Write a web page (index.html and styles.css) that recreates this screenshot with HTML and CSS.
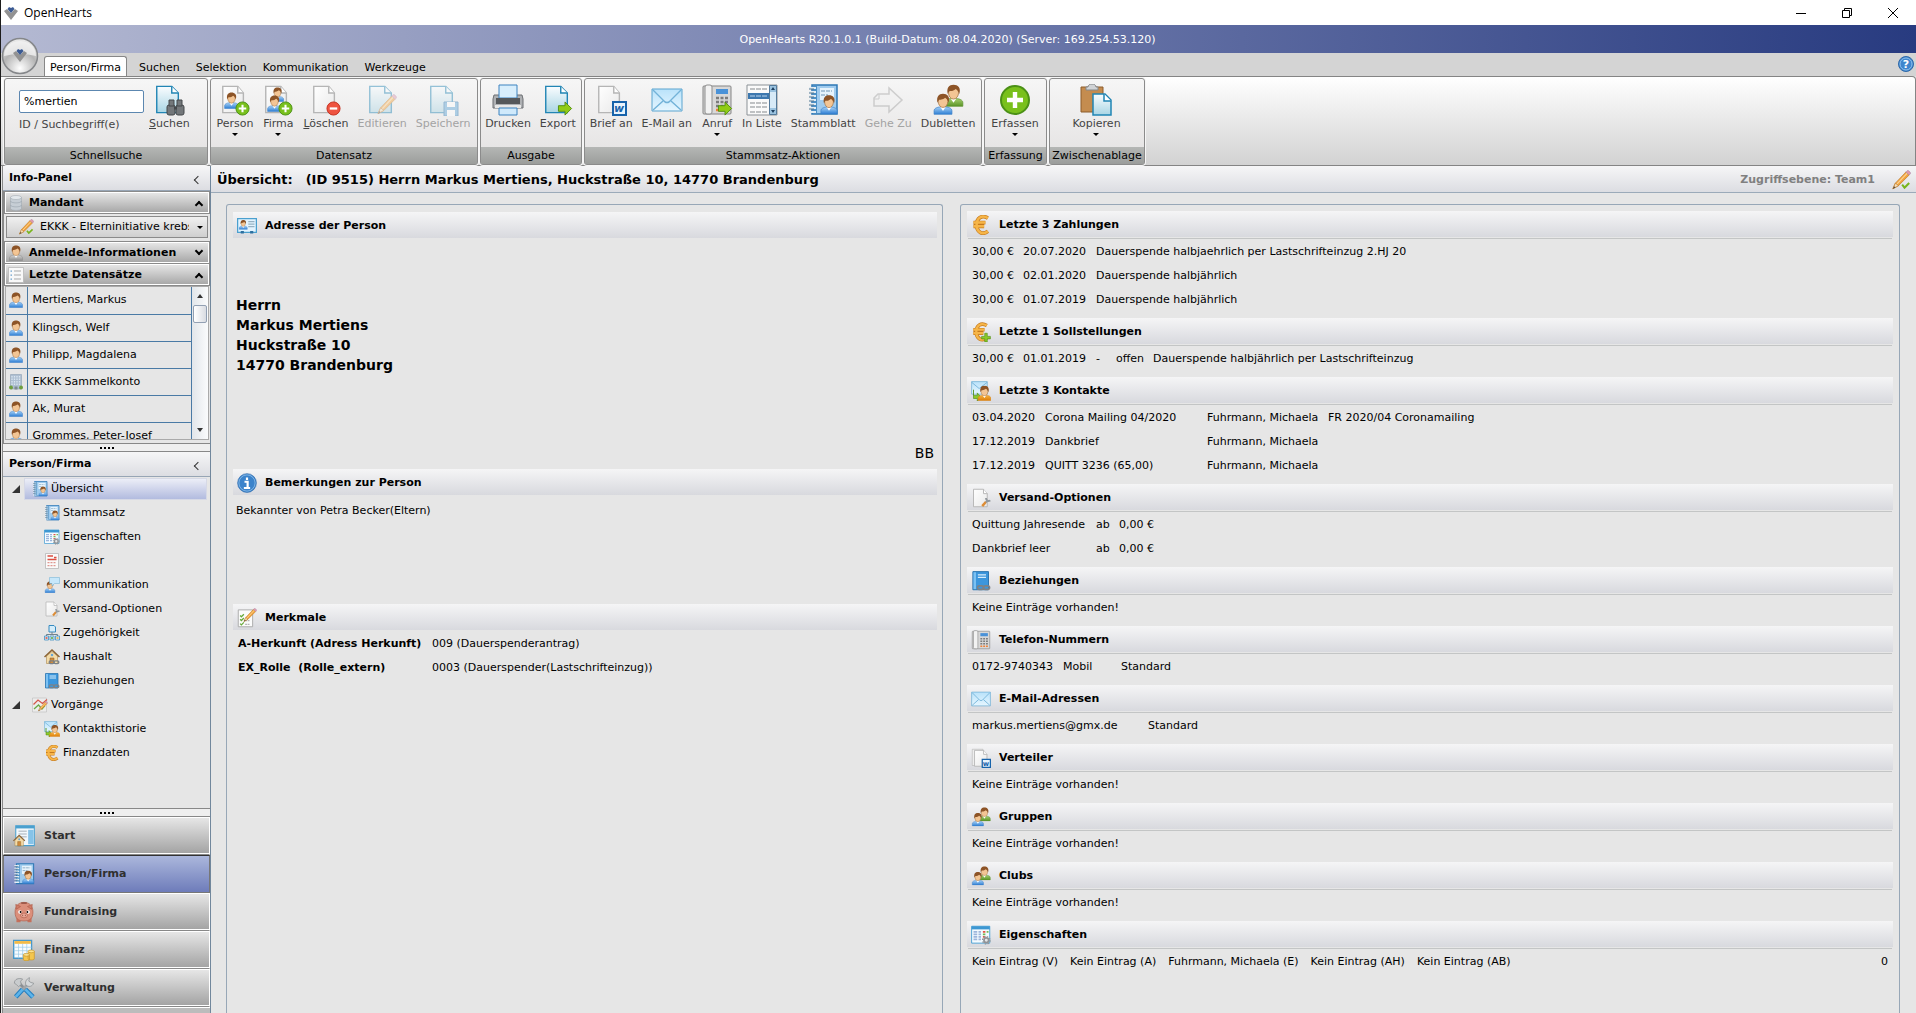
FILE: index.html
```html
<!DOCTYPE html>
<html lang="de">
<head>
<meta charset="utf-8">
<title>OpenHearts</title>
<link rel="stylesheet" href="styles.css">
</head>
<body>
<svg class="defs" aria-hidden="true">
  <defs>
    <linearGradient id="gBlue" x1="0" y1="0" x2="0" y2="1"><stop offset="0" stop-color="#a9d3f7"/><stop offset="1" stop-color="#2f7fd4"/></linearGradient>
    <linearGradient id="gGreen" x1="0" y1="0" x2="0" y2="1"><stop offset="0" stop-color="#a8d070"/><stop offset="1" stop-color="#5a9426"/></linearGradient>
    <linearGradient id="gOrange" x1="0" y1="0" x2="0" y2="1"><stop offset="0" stop-color="#f6b545"/><stop offset="1" stop-color="#dd7d08"/></linearGradient>
    <linearGradient id="gGray" x1="0" y1="0" x2="0" y2="1"><stop offset="0" stop-color="#d6d6d6"/><stop offset="1" stop-color="#8e8e8e"/></linearGradient>
    <linearGradient id="gDoc" x1="0" y1="0" x2="0" y2="1"><stop offset="0" stop-color="#fafdff"/><stop offset="1" stop-color="#a9d5e4"/></linearGradient>
    <linearGradient id="gPaper" x1="0" y1="0" x2="1" y2="1"><stop offset="0" stop-color="#ffffff"/><stop offset="1" stop-color="#e9e9e9"/></linearGradient>
    <linearGradient id="gMail" x1="0" y1="0" x2="0" y2="1"><stop offset="0" stop-color="#b9e2fa"/><stop offset="1" stop-color="#e6f6ff"/></linearGradient>
    <radialGradient id="gOrb" cx=".5" cy=".85" r=".8"><stop offset="0" stop-color="#fff"/><stop offset=".6" stop-color="#b4b4b4"/><stop offset="1" stop-color="#e8e8e8"/></radialGradient>
  </defs>
  <symbol id="logo" viewBox="0 0 16 16"><path d="M1 6 4 4l4 4 4-4 3 2-7 9z" fill="#929292"/><path d="M4.500 4 6 2l2 1 2-1 1.500 2L8 8z" fill="#3a5a94"/></symbol>
  <symbol id="head" viewBox="0 0 32 32"><path d="M3 31v-5c0-4 5-6 13-6s13 2 13 6v5z" stroke-width="1"/><path d="M12 20h8l-4 6z" fill="#fff" stroke="none"/><ellipse cx="16" cy="12" rx="7" ry="9" fill="#f3c594" stroke="#a26f3b"/><path d="M8 14C6 5 10 1 16 1s11 4 8 13c-1-4-3-6-5-7-3 3-8 3-9 3z" fill="#8d5427" stroke="none"/></symbol>
  <symbol id="person" viewBox="0 0 32 32"><use href="#head" fill="url(#gBlue)" stroke="#3a7fc8"/></symbol>
  <symbol id="person-green" viewBox="0 0 32 32"><use href="#head" fill="url(#gGreen)" stroke="#5d9231"/></symbol>
  <symbol id="person-orange" viewBox="0 0 32 32"><use href="#head" fill="url(#gOrange)" stroke="#d9820f"/></symbol>
  <symbol id="person-gray" viewBox="0 0 32 32"><use href="#head" fill="url(#gGray)" stroke="#888"/></symbol>
  <symbol id="doc" viewBox="0 0 32 32"><path d="M4 2h16l7 7v21H4z" fill="url(#gDoc)" stroke="#2185b4" stroke-width="1.500"/><path d="M20 2v7h7" fill="#fff" stroke="#2185b4" stroke-width="1.500"/></symbol>
  <symbol id="paper" viewBox="0 0 32 32"><path d="M4 2h16l6 7v21H4z" fill="url(#gPaper)" stroke="#b5b5b5" stroke-width="1.500"/><path d="M20 2v7h6" fill="#fff" stroke="#b5b5b5" stroke-width="1.500"/></symbol>
  <symbol id="plus" viewBox="0 0 16 16"><circle cx="8" cy="8" r="7" fill="#79c01c" stroke="#4b9016"/><path d="M8 4v8M4 8h8" stroke="#fff" stroke-width="2.200"/></symbol>
  <symbol id="minus" viewBox="0 0 16 16"><circle cx="8" cy="8" r="7" fill="#ee5340" stroke="#c5301f"/><path d="M4 8h8" stroke="#fff" stroke-width="2.400"/></symbol>
  <symbol id="pencil" viewBox="0 0 32 32"><path d="M3 30 7 21 24 3l5 5L12 25z" fill="#f2a33c" stroke="#b87422"/><path d="M9 23 26 5" stroke="#fbd394" stroke-width="2"/><path d="M3 30 7 21l5 4z" fill="#f4dfbe" stroke="#b87422"/><path d="m3 30 2-4 2 2z" fill="#444"/><path d="m24 3 2-2c2-1 6 3 5 5l-2 2z" fill="#e49aae" stroke="#a98aa8"/></symbol>
  <symbol id="check" viewBox="0 0 16 16"><path d="m2 8 4 5 8-8" fill="none" stroke="#78b51c" stroke-width="3.500"/></symbol>
  <symbol id="arrow" viewBox="0 0 16 16"><path d="M1 5h7V1l7 7-7 7v-4H1z" fill="#90cb15" stroke="#518d10"/></symbol>
  <symbol id="chain" viewBox="0 0 16 8"><g fill="none" stroke="#7d8286" stroke-width="2"><rect x="1" y="2" width="7" height="4" rx="2"/><rect x="8" y="2" width="7" height="4" rx="2"/></g></symbol>
  <symbol id="gear" viewBox="0 0 16 16"><circle cx="8" cy="8" r="4" fill="#e4e6e8" stroke="#909498" stroke-width="3"/><circle cx="8" cy="8" r="6.500" fill="none" stroke="#909498" stroke-width="2" stroke-dasharray="2.550"/></symbol>
  <symbol id="mail" viewBox="0 0 32 32"><path d="M1 5h30v22H1z" fill="url(#gMail)" stroke="#5ba4cf"/><path d="m2 26 10-9M30 26l-10-9M2 6l12 12q2 1 4 0L30 6" fill="none" stroke="#72b2d8" stroke-width="1.400"/></symbol>
  <symbol id="phone" viewBox="0 0 32 32"><rect x="2" y="2" width="28" height="28" rx="1" fill="#d8d8d8" stroke="#858585"/><rect x="4" y="1" width="7" height="29" rx="2" fill="#f2f2f2" stroke="#8e8e8e"/><path d="M15 5h12v5H15z" fill="#4a92d8"/><path d="M15 14h12M15 18h12M15 22h12" stroke="#7c7c7c" stroke-width="2.500" stroke-dasharray="3 1.500"/><path d="M15 26h12" stroke="#ee8138" stroke-width="2.500" stroke-dasharray="3 1.500"/></symbol>
  <symbol id="notebook" viewBox="0 0 32 32"><path d="M5 1h25v29H5z" fill="#9fcbee" stroke="#2e78b5" stroke-width="1.500"/><path d="M6 2h4v27H6z" fill="#4b90c6"/><path d="M2 4h7M2 8h7M2 12h7M2 16h7M2 20h7M2 24h7M2 28h7" stroke="#e3edf4" stroke-width="2"/><path d="M2 5h5M2 9h5M2 13h5M2 17h5M2 21h5M2 25h5" stroke="#55768f"/><path d="M13 4h14v12H13z" fill="#e6f3fc"/><path d="M14 7h11M14 11h7" stroke="#6e95b4" stroke-dasharray="4 1"/><use href="#person" x="12" y="9" width="20" height="23"/></symbol>
  <symbol id="book" viewBox="0 0 32 32"><path d="M3 1h25v29H3z" fill="#3c96dc" stroke="#2772ad" stroke-width="1.500"/><path d="M4 2h4v27H4z" fill="#7cc1f2"/><path d="M11 6h13M11 10h13" stroke="#d7edfb" stroke-width="2"/><use href="#chain" x="8" y="21" width="24" height="11"/></symbol>
  <symbol id="group" viewBox="0 0 32 32"><use href="#person-green" x="10" y="0" width="23" height="23"/><use href="#person" x="0" y="9" width="22" height="22"/></symbol>
  <symbol id="euro" viewBox="0 0 32 32"><path d="M27 5C17-1 9 5 9 16s9 17 18 10M4 12h19M4 18h17" fill="none" stroke="#c57a1e" stroke-width="6"/><path d="M27 5C17-1 9 5 9 16s9 17 18 10M4 12h19M4 18h17" fill="none" stroke="#f6b548" stroke-width="4"/></symbol>
  <symbol id="euro-plus" viewBox="0 0 32 32"><use href="#euro" width="30" height="32"/><path d="M22 18h4v5h5v4h-5v5h-4v-5h-5v-4h5z" fill="#8cc928" stroke="#4d8c12"/></symbol>
  <symbol id="contact" viewBox="0 0 32 32"><path d="M1 1h25v20H1z" fill="url(#gMail)" stroke="#5ba4cf"/><path d="m1 2 12 10L26 2" fill="none" stroke="#72b2d8" stroke-width="1.400"/><path d="M4 14v9h6v-4l6 7-6 6v-4H4z" fill="#8cc928" stroke="#4d8c12"/><use href="#person-orange" x="9" y="7" width="25" height="25"/></symbol>
  <symbol id="props" viewBox="0 0 32 32"><path d="M1 2h29v27H1z" fill="#f4fbff" stroke="#4aa0d4" stroke-width="1.500"/><path d="M1 2h29v5H1z" fill="#3d97d2"/><path d="M4 11h6M4 15h6M4 19h6M4 23h6M12 11h4M12 15h4M12 19h4M12 23h4" stroke="#9cb5dc" stroke-width="2.500"/><path d="M19 11h4M19 19h4" stroke="#e45546" stroke-width="2.500"/><path d="M19 15h4M25 11h3" stroke="#73ba53" stroke-width="2.500"/><use href="#gear" x="17" y="17" width="15" height="15"/></symbol>
  <symbol id="send" viewBox="0 0 32 32"><use href="#paper" width="32" height="32"/><path d="m18 29 6-7" stroke="#dd8c35" stroke-width="4"/><path d="m24 23 3-4M24 16c0 4 3 6 7 4" fill="none" stroke="#92989d" stroke-width="3"/></symbol>
  <symbol id="card" viewBox="0 0 32 32"><path d="M1 4h30v22H1z" fill="#e3f4ff" stroke="#4ba0cf" stroke-width="2"/><use href="#person" x="2" y="6" width="16" height="16"/><path d="M18 9h10M18 13h10M18 17h10" stroke="#97b2c4" stroke-width="2"/><path d="M6 26h5M21 26h5" stroke="#2c6f9f" stroke-width="4"/></symbol>
  <symbol id="info" viewBox="0 0 32 32"><circle cx="16" cy="16" r="15" fill="#3b83cb" stroke="#2b66a8"/><circle cx="16" cy="16" r="13" fill="none" stroke="#a9d2f3"/><path d="M16 7v4M12 14h5v10M11 24h10" fill="none" stroke="#fff" stroke-width="3.500"/></symbol>
  <symbol id="notes" viewBox="0 0 32 32"><path d="M2 3h23v27H2z" fill="#fbfbfb" stroke="#aaa" stroke-width="1.500"/><path d="m5 12 2 2 4-4M5 18l2 2 4-4M5 25l2 2 4-4" fill="none" stroke="#67a93a" stroke-width="2"/><path d="M13 20h8M13 26h8" stroke="#b5b5b5" stroke-width="2" stroke-dasharray="3 1"/><use href="#pencil" x="9" y="0" width="23" height="23"/></symbol>
  <symbol id="dossier" viewBox="0 0 32 32"><path d="M3 1h26v30H3z" fill="#fafafa" stroke="#b4b4b4" stroke-width="1.500"/><path d="M7 6h11M20 9h5M7 13h18" stroke="#dc4f41" stroke-width="3"/><path d="M7 19h18M7 25h18" stroke="#df9790" stroke-width="2.500" stroke-dasharray="4 2"/></symbol>
  <symbol id="talk" viewBox="0 0 32 32"><use href="#person" x="0" y="8" width="24" height="24"/><path d="M11 1h20v12H21l-5 5v-5h-5z" fill="#c7e7fa" stroke="#68add3"/></symbol>
  <symbol id="tree" viewBox="0 0 32 32"><path d="M10 1h10l3 3v10H10z" fill="#d5edfa" stroke="#378bc0" stroke-width="2"/><path d="M16 14v5M5 23v-4h22v4" fill="none" stroke="#74828c" stroke-width="2"/><g fill="#dfeff8" stroke="#378bc0" stroke-width="1.500"><path d="M1 22h8v8H1zM12 22h8v8h-8zM23 22h8v8h-8z"/></g><path d="M3 26h4" stroke="#dd4433" stroke-width="3"/><path d="M14 26h4" stroke="#56a738" stroke-width="3"/><path d="M25 26h4" stroke="#e4a436" stroke-width="3"/></symbol>
  <symbol id="house" viewBox="0 0 32 32"><path d="M5 14v15h22V14L16 5z" fill="#f3dba8" stroke="#9d7434"/><path d="M1 16 16 2l15 14" fill="none" stroke="#8b6435" stroke-width="3"/><path d="M12 18h8v11h-8z" fill="#d08b3c" stroke="#8b5c24"/><circle cx="16" cy="12" r="2.500" fill="#68a6d2"/></symbol>
  <symbol id="household" viewBox="0 0 32 32"><use href="#house" width="32" height="32"/><use href="#chain" x="8" y="21" width="24" height="11"/></symbol>
  <symbol id="process" viewBox="0 0 32 32"><path d="M1 2h28v28H1z" fill="#ececec" stroke="#b3b3b3"/><path d="m3 15 9-9 9 7 9-8" fill="none" stroke="#d4574a" stroke-width="2.500"/><path d="m4 24 9-8 7 8 6-7" fill="none" stroke="#68aa45" stroke-width="2.500"/><use href="#pencil" x="11" y="8" width="21" height="21"/></symbol>
  <symbol id="building" viewBox="0 0 32 32"><path d="M5 1h22v29H5z" fill="#aebfd2" stroke="#8197ab"/><path d="M8 4v22M13 4v20M18 4v20M23 4v22" stroke="#dbe7f1" stroke-width="2.500" stroke-dasharray="3 2"/><path d="M13 25h6v6h-6z" fill="#7f8a8f"/><circle cx="6" cy="27" r="4" fill="#6f9f3e"/><circle cx="26" cy="27" r="4" fill="#6f9f3e"/></symbol>
  <symbol id="db" viewBox="0 0 32 32"><path d="M5 5v22c0 5 22 5 22 0V5z" fill="#c6ced5" stroke="#9aa4ad"/><path d="M5 12c0 5 22 5 22 0M5 20c0 5 22 5 22 0" fill="none" stroke="#8f9ba5"/><ellipse cx="16" cy="5" rx="11" ry="4" fill="#e4e9ed" stroke="#9aa4ad"/></symbol>
  <symbol id="lines" viewBox="0 0 32 32"><path d="M1 1h30v30H1z" fill="#f8f8f8" stroke="#b5b5b5" stroke-width="1.500"/><path d="M12 8h14M12 16h14M12 24h14" stroke="#a9a9a9" stroke-width="2"/><path d="M5 8h3M5 16h3M5 24h3" stroke="#6ba0cc" stroke-width="2.500"/></symbol>
  <symbol id="check-pencil" viewBox="0 0 32 32"><use href="#pencil" width="32" height="32"/><use href="#check" x="16" y="16" width="15" height="15"/></symbol>
  <symbol id="start" viewBox="0 0 32 32"><path d="M4 1h27v29H4z" fill="#f2f8fc" stroke="#4aa0cf" stroke-width="1.500"/><path d="M4 1h27v4H4z" fill="#4aa0cf"/><path d="M8 9h12M8 13h12M8 17h12" stroke="#c0c8cf" stroke-width="2"/><path d="M22 7h8v21h-8z" fill="#86c3e8"/><use href="#house" x="0" y="14" width="18" height="18"/></symbol>
  <symbol id="pig" viewBox="0 0 32 32"><path d="M5 24h6v7H5zM21 24h6v7h-6z" fill="#c4705c"/><path d="M3 16C3 6 9 2 16 2s13 4 13 14-5 13-13 13S3 26 3 16z" fill="#db8f7b" stroke="#b0604d"/><path d="M5 12 4 5l7 3zM27 12l1-7-7 3z" fill="#cf7c67" stroke="#b0604d"/><path d="M12 3h8" stroke="#8d4a3b" stroke-width="2"/><circle cx="10" cy="16" r="2.500" fill="#fff"/><circle cx="22" cy="16" r="2.500" fill="#fff"/><circle cx="11" cy="16" r="1.300"/><circle cx="21" cy="16" r="1.300"/><ellipse cx="16" cy="21" rx="5" ry="3.500" fill="#eaa796" stroke="#b0604d"/><path d="M14 20v2M18 20v2" stroke="#7c3d30"/></symbol>
  <symbol id="finance" viewBox="0 0 32 32"><path d="M1 2h26v26H1z" fill="#f7fcff" stroke="#4898ca" stroke-width="2"/><path d="M2 3h24v4H2z" fill="#f3ba46"/><path d="M1 12h26M1 17h26M1 22h26M8 7v21M14 7v21M20 7v21" stroke="#9ccae6"/><path d="M15 23v7c0 2 9 2 9 0v-7M22 18v11c0 2 9 2 9 0V18" fill="#f4c64e" stroke="#c79324"/><ellipse cx="19.500" cy="23" rx="4.500" ry="2" fill="#fbe391" stroke="#c79324"/><ellipse cx="26.500" cy="18" rx="4.500" ry="2" fill="#fbe391" stroke="#c79324"/></symbol>
  <symbol id="tools" viewBox="0 0 32 32"><path d="m8 8 12 12" stroke="#8c9094" stroke-width="4"/><path d="M2 9C2 3 8 1 14 3l-3 3 1 5-4 3-3-3z" fill="#c9ccce" stroke="#85898c"/><path d="m20 12-6 6" stroke="#a1a5a8" stroke-width="4"/><path d="M30 9c-2 5-7 6-11 3-2-4 0-9 5-11l-1 5 3 2z" fill="#d6d9db" stroke="#85898c"/><path d="m18 18 11 11M14 18 4 29" stroke="#277fbf" stroke-width="7"/><path d="m18 18 11 11M14 18 4 29" stroke="#5cb4ea" stroke-width="4"/></symbol>
</svg>

<header class="titlebar">
  <svg class="i16"><use href="#logo"/></svg>
  <h1>OpenHearts</h1>
  <div class="win-buttons">
    <button aria-label="Minimieren"><svg viewBox="0 0 10 10"><path d="M0 5.500h10"/></svg></button>
    <button aria-label="Verkleinern"><svg viewBox="0 0 10 10"><path d="M.5 2.500h7v7h-7zM2.500 2V.5h7v7H8"/></svg></button>
    <button aria-label="Schließen"><svg viewBox="0 0 10 10"><path d="m0 0 10 10M10 0 0 10"/></svg></button>
  </div>
</header>
<div class="caption">OpenHearts R20.1.0.1 (Build-Datum: 08.04.2020) (Server: 169.254.53.120)</div>
<nav class="tabs">
  <button class="orb" aria-label="Menü"><svg viewBox="0 0 38 38"><circle cx="19" cy="19" r="17.500" fill="url(#gOrb)" stroke="#85878a" stroke-width="1.500"/><path d="M3 19C3-1 35-1 35 19q-16-4-32 0" fill="#f4f4f4" opacity=".75"/><use href="#logo" x="11" y="10" width="16" height="16"/></svg></button>
  <a class="tab active" href="#">Person/Firma</a>
  <a class="tab" href="#">Suchen</a>
  <a class="tab" href="#">Selektion</a>
  <a class="tab" href="#">Kommunikation</a>
  <a class="tab" href="#">Werkzeuge</a>
  <button class="help" aria-label="Hilfe"><svg viewBox="0 0 16 16"><circle cx="8" cy="8" r="7.500" fill="#3f86cd" stroke="#2f68a8"/><circle cx="8" cy="8" r="6" fill="none" stroke="#8fc0ec"/><text x="8" y="12" text-anchor="middle" font-size="11" font-weight="bold" fill="#fff">?</text></svg></button>
</nav>

<section class="ribbon">
  <div class="group g-search">
    <div class="items">
      <div class="search"><input id="q" type="text" value="%mertien"><label for="q">ID / Suchbegriff(e)</label></div>
      <button class="tool"><svg viewBox="0 0 32 32"><use href="#doc" width="30" height="31"/><g fill="#73777a" stroke="#45484b"><rect x="14" y="21" width="8" height="10" rx="2"/><rect x="23" y="21" width="8" height="10" rx="2"/><path d="M16 16h5v6h-5zM24 16h5v6h-5z"/></g><path d="M21 24h3" stroke="#45484b" stroke-width="3"/></svg><span><u>S</u>uchen</span></button>
    </div>
    <h2>Schnellsuche</h2>
  </div>
  <div class="group g-record">
    <div class="items">
      <button class="tool"><svg viewBox="0 0 32 32"><use href="#paper" width="30" height="31"/><use href="#person" x="4" y="8" width="17" height="17"/><use href="#plus" x="16" y="17" width="15" height="15"/></svg><span>Person</span><i></i></button>
      <button class="tool"><svg viewBox="0 0 32 32"><use href="#paper" width="30" height="31"/><use href="#person" x="8" y="3" width="15" height="15"/><use href="#person" x="4" y="11" width="17" height="17"/><use href="#plus" x="16" y="17" width="15" height="15"/></svg><span>Firma</span><i></i></button>
      <button class="tool"><svg viewBox="0 0 32 32"><use href="#paper" width="30" height="31"/><use href="#minus" x="16" y="17" width="15" height="15"/></svg><span><u>L</u>öschen</span></button>
      <button class="tool" disabled><svg viewBox="0 0 32 32"><use href="#doc" width="30" height="31"/><use href="#pencil" x="10" y="10" width="21" height="21"/></svg><span>Editieren</span></button>
      <button class="tool" disabled><svg viewBox="0 0 32 32"><use href="#doc" width="30" height="31"/><path d="M17 18h14v14H17z" fill="#5fa7d8" stroke="#2a76b0"/><path d="M20 18h8v5h-8zM20 26h8v6h-8z" fill="#fff"/></svg><span>Speichern</span></button>
    </div>
    <h2>Datensatz</h2>
  </div>
  <div class="group g-output">
    <div class="items">
      <button class="tool"><svg viewBox="0 0 32 32"><path d="M2 11h28l1 4v9H1v-9z" fill="#aeb0b3" stroke="#6c6f72"/><path d="M7 1h18v13H7z" fill="#d8eefc" stroke="#3c83c0"/><path d="M4 14h24v6H4z" fill="#55585b"/><path d="M3 21h26v3H3z" fill="#e8e8e8"/><path d="M7 24h18v7H7z" fill="#cfe9fb" stroke="#3c83c0"/></svg><span>Drucken</span></button>
      <button class="tool"><svg viewBox="0 0 32 32"><use href="#doc" width="30" height="31"/><use href="#arrow" x="15" y="17" width="16" height="15"/></svg><span>Export</span></button>
    </div>
    <h2>Ausgabe</h2>
  </div>
  <div class="group g-actions">
    <div class="items">
      <button class="tool"><svg viewBox="0 0 32 32"><use href="#paper" width="30" height="31"/><path d="M18 18h13v13H18z" fill="#e8f3fc" stroke="#1763ab" stroke-width="2"/><text x="24" y="28" text-anchor="middle" font-size="11" font-weight="bold" font-style="italic" fill="#1763ab">w</text></svg><span>Brief an</span></button>
      <button class="tool"><svg><use href="#mail"/></svg><span>E-Mail an</span></button>
      <button class="tool"><svg viewBox="0 0 32 32"><use href="#phone" width="32" height="32"/><use href="#arrow" x="16" y="17" width="16" height="15"/></svg><span>Anruf</span><i></i></button>
      <button class="tool"><svg viewBox="0 0 32 32"><path d="M1 1h30v30H1z" fill="#fafafa" stroke="#8b9196"/><path d="M2 9h21v6H2z" fill="#3c77ae"/><path d="M4 5h17M4 19h17M4 23h17M4 28h17" stroke="#84898d" stroke-dasharray="5 1"/><path d="M4 12h17" stroke="#b9d5ee" stroke-dasharray="5 1"/><path d="M23.500 1.500h7v29h-7z" fill="#d7eaf7" stroke="#53799a"/><path d="M24 2h6v6h-6zM24 24h6v6h-6z" fill="#9bc3e0"/><path d="m25 6 2-3 2 3zM25 26l2 3 2-3z" fill="#1d3f60"/></svg><span>In Liste</span></button>
      <button class="tool"><svg><use href="#notebook"/></svg><span>Stammblatt</span></button>
      <button class="tool" disabled><svg viewBox="0 0 32 32"><path d="M2 14l4-4h11V4l13 12-13 12v-6H2z" fill="#f2f2f2" stroke="#a2a2a2" stroke-width="1.500"/><path d="M7 10v5H2" fill="none" stroke="#a2a2a2"/></svg><span>Gehe Zu</span></button>
      <button class="tool"><svg><use href="#group"/></svg><span>Dubletten</span></button>
    </div>
    <h2>Stammsatz-Aktionen</h2>
  </div>
  <div class="group g-entry">
    <div class="items">
      <button class="tool"><svg><use href="#plus"/></svg><span>Erfassen</span><i></i></button>
    </div>
    <h2>Erfassung</h2>
  </div>
  <div class="group g-clip">
    <div class="items">
      <button class="tool"><svg viewBox="0 0 32 32"><path d="M1 3h22v25H1z" fill="#c48c4f" stroke="#8c5d2c"/><path d="M8 3c0-4 8-4 8 0h2v3H6V3z" fill="#d0d3d6" stroke="#85888b"/><path d="M13 10h12l6 6v15H13z" fill="url(#gDoc)" stroke="#2185b4" stroke-width="1.500"/><path d="M24 10v7h7" fill="#fff" stroke="#2185b4" stroke-width="1.500"/></svg><span>Kopieren</span><i></i></button>
    </div>
    <h2>Zwischenablage</h2>
  </div>
</section>

<div class="body">
  <aside class="sidebar">
    <h2 class="panel-head">Info-Panel<button class="collapse" aria-label="Einklappen"></button></h2>
    <div class="info">
      <h3 class="fold"><svg class="i16"><use href="#db"/></svg>Mandant<b class="up"></b></h3>
      <div class="combo">
        <svg class="i16"><use href="#check-pencil"/></svg>
        <select aria-label="Mandant"><option>EKKK - Elterninitiative krebs</option></select>
        <i></i>
      </div>
      <h3 class="fold"><svg class="i16"><use href="#person-gray"/></svg>Anmelde-Informationen<b class="down"></b></h3>
      <h3 class="fold"><svg class="i16"><use href="#lines"/></svg>Letzte Datensätze<b class="up"></b></h3>
      <div class="recent">
        <table>
          <tr><td><svg class="i16"><use href="#person"/></svg></td><td>Mertiens, Markus</td></tr>
          <tr><td><svg class="i16"><use href="#person"/></svg></td><td>Klingsch, Welf</td></tr>
          <tr><td><svg class="i16"><use href="#person"/></svg></td><td>Philipp, Magdalena</td></tr>
          <tr><td><svg class="i16"><use href="#building"/></svg></td><td>EKKK Sammelkonto</td></tr>
          <tr><td><svg class="i16"><use href="#person"/></svg></td><td>Ak, Murat</td></tr>
          <tr><td><svg class="i16"><use href="#person"/></svg></td><td>Grommes, Peter-Josef</td></tr>
        </table>
        <div class="scroll"><i class="sup"></i><span></span><i class="sdown"></i></div>
      </div>
    </div>
    <div class="splitter"></div>
    <h2 class="panel-head">Person/Firma<button class="collapse" aria-label="Einklappen"></button></h2>
    <ul class="tree">
      <li class="root"><a class="selected" href="#"><svg class="i16"><use href="#notebook"/></svg>Übersicht</a></li>
      <li><a href="#"><svg class="i16"><use href="#notebook"/></svg>Stammsatz</a></li>
      <li><a href="#"><svg class="i16"><use href="#props"/></svg>Eigenschaften</a></li>
      <li><a href="#"><svg class="i16"><use href="#dossier"/></svg>Dossier</a></li>
      <li><a href="#"><svg class="i16"><use href="#talk"/></svg>Kommunikation</a></li>
      <li><a href="#"><svg class="i16"><use href="#send"/></svg>Versand-Optionen</a></li>
      <li><a href="#"><svg class="i16"><use href="#tree"/></svg>Zugehörigkeit</a></li>
      <li><a href="#"><svg class="i16"><use href="#household"/></svg>Haushalt</a></li>
      <li><a href="#"><svg class="i16"><use href="#book"/></svg>Beziehungen</a></li>
      <li class="root"><a href="#"><svg class="i16"><use href="#process"/></svg>Vorgänge</a></li>
      <li><a href="#"><svg class="i16"><use href="#contact"/></svg>Kontakthistorie</a></li>
      <li><a href="#"><svg class="i16"><use href="#euro"/></svg>Finanzdaten</a></li>
    </ul>
    <div class="splitter"></div>
    <nav class="modules">
      <button><svg><use href="#start"/></svg>Start</button>
      <button class="current"><svg><use href="#notebook"/></svg>Person/Firma</button>
      <button><svg><use href="#pig"/></svg>Fundraising</button>
      <button><svg><use href="#finance"/></svg>Finanz</button>
      <button><svg><use href="#tools"/></svg>Verwaltung</button>
      <div class="more"></div>
    </nav>
  </aside>

  <main>
    <div class="main-head">
      <h2><span>Übersicht:</span> <span>(ID 9515) Herrn Markus Mertiens, Huckstraße 10, 14770 Brandenburg</span></h2>
      <p>Zugriffsebene: Team1</p>
      <svg><use href="#check-pencil"/></svg>
    </div>
    <div class="columns">
      <div class="panel left">
        <section class="s-address">
          <h3><svg><use href="#card"/></svg>Adresse der Person</h3>
          <address>Herrn<br>Markus Mertiens<br>Huckstraße 10<br>14770 Brandenburg</address>
          <p class="code">BB</p>
        </section>
        <section class="s-remarks">
          <h3><svg><use href="#info"/></svg>Bemerkungen zur Person</h3>
          <p>Bekannter von Petra Becker(Eltern)</p>
        </section>
        <section class="s-traits">
          <h3><svg><use href="#notes"/></svg>Merkmale</h3>
          <table>
            <tr><th>A-Herkunft (Adress Herkunft)</th><td>009 (Dauerspenderantrag)</td></tr>
            <tr><th>EX_Rolle&nbsp; (Rolle_extern)</th><td>0003 (Dauerspender(Lastschrifteinzug))</td></tr>
          </table>
        </section>
      </div>
      <div class="panel right">
        <section>
          <h3><svg><use href="#euro"/></svg>Letzte 3 Zahlungen</h3>
          <table>
            <tr><td class="c-amount">30,00 €</td><td class="c-date">20.07.2020</td><td>Dauerspende halbjaehrlich per Lastschrifteinzug 2.HJ 20</td></tr>
            <tr><td>30,00 €</td><td>02.01.2020</td><td>Dauerspende halbjährlich</td></tr>
            <tr><td>30,00 €</td><td>01.07.2019</td><td>Dauerspende halbjährlich</td></tr>
          </table>
        </section>
        <section>
          <h3><svg><use href="#euro-plus"/></svg>Letzte 1 Sollstellungen</h3>
          <table>
            <tr><td class="c-amount">30,00 €</td><td class="c-date">01.01.2019</td><td class="c-dash">-</td><td class="c-state">offen</td><td>Dauerspende halbjährlich per Lastschrifteinzug</td></tr>
          </table>
        </section>
        <section>
          <h3><svg><use href="#contact"/></svg>Letzte 3 Kontakte</h3>
          <table>
            <tr><td class="c-date">03.04.2020</td><td class="c-subject">Corona Mailing 04/2020</td><td class="c-name">Fuhrmann, Michaela</td><td>FR 2020/04 Coronamailing</td></tr>
            <tr><td>17.12.2019</td><td>Dankbrief</td><td>Fuhrmann, Michaela</td><td></td></tr>
            <tr><td>17.12.2019</td><td>QUITT 3236 (65,00)</td><td>Fuhrmann, Michaela</td><td></td></tr>
          </table>
        </section>
        <section>
          <h3><svg><use href="#send"/></svg>Versand-Optionen</h3>
          <table>
            <tr><td class="c-option">Quittung Jahresende</td><td class="c-from">ab</td><td>0,00 €</td></tr>
            <tr><td>Dankbrief leer</td><td>ab</td><td>0,00 €</td></tr>
          </table>
        </section>
        <section>
          <h3><svg><use href="#book"/></svg>Beziehungen</h3>
          <p>Keine Einträge vorhanden!</p>
        </section>
        <section>
          <h3><svg><use href="#phone"/></svg>Telefon-Nummern</h3>
          <table><tr><td class="c-number">0172-9740343</td><td class="c-kind">Mobil</td><td>Standard</td></tr></table>
        </section>
        <section>
          <h3><svg><use href="#mail"/></svg>E-Mail-Adressen</h3>
          <table><tr><td class="c-mail">markus.mertiens@gmx.de</td><td>Standard</td></tr></table>
        </section>
        <section>
          <h3><svg viewBox="0 0 32 32"><path d="M2 2h17v26H2z" fill="#eee" stroke="#b5b5b5"/><use href="#paper" x="2" y="1" width="29" height="31"/><path d="M18 18h13v13H18z" fill="#e8f3fc" stroke="#1763ab" stroke-width="2"/><text x="24" y="28" text-anchor="middle" font-size="11" font-weight="bold" fill="#1763ab">w</text></svg>Verteiler</h3>
          <p>Keine Einträge vorhanden!</p>
        </section>
        <section>
          <h3><svg><use href="#group"/></svg>Gruppen</h3>
          <p>Keine Einträge vorhanden!</p>
        </section>
        <section>
          <h3><svg><use href="#group"/></svg>Clubs</h3>
          <p>Keine Einträge vorhanden!</p>
        </section>
        <section>
          <h3><svg><use href="#props"/></svg>Eigenschaften</h3>
          <div class="attributes"><span>Kein Eintrag (V)</span><span>Kein Eintrag (A)</span><span>Fuhrmann, Michaela (E)</span><span>Kein Eintrag (AH)</span><span>Kein Eintrag (AB)</span><span class="count">0</span></div>
        </section>
      </div>
    </div>
  </main>
</div>
</body>
</html>
```
FILE: styles.css
```css
* { box-sizing: border-box; }

body {
  margin: 0;
  height: 100vh;
  overflow: hidden;
  display: flex;
  flex-direction: column;
  background: #e6e6e6;
  border-left: 1px solid #1c1c1c;
  color: #000;
  font: 11px/16px Verdana, "DejaVu Sans", sans-serif;
}

h1, h2, h3, p, ul, address { margin: 0; padding: 0; font: inherit; }
ul { list-style: none; }
button, input, select { font: inherit; color: inherit; }
button { margin: 0; padding: 0; border: 0; background: none; }
a { color: inherit; text-decoration: none; }
table { border-collapse: collapse; }
td, th { padding: 0; text-align: left; white-space: nowrap; }
.defs { position: absolute; width: 0; height: 0; }
.i16 { width: 16px; height: 16px; flex: none; display: block; }

/* window frame */
.titlebar {
  height: 25px;
  flex: none;
  display: flex;
  align-items: center;
  gap: 5px;
  padding-left: 2px;
  background: #fff;
}
.titlebar h1 { flex: 1; font: 12px/16px "Segoe UI", "Open Sans", sans-serif; }
.win-buttons { display: flex; }
.win-buttons button { width: 46px; height: 24px; display: grid; place-items: center; }
.win-buttons svg { width: 10px; height: 10px; fill: none; stroke: #000; }
.caption {
  height: 28px;
  flex: none;
  padding: 7px 22px 0 0;
  text-align: center;
  color: #fff;
  background: linear-gradient(90deg, #b4b9d2, #6f7bac 50%, #283b80);
}

/* ribbon tabs */
.tabs {
  height: 23px;
  flex: none;
  display: flex;
  align-items: flex-end;
  position: relative;
  padding-left: 43px;
  background: #d4d4d4;
}
.tab { height: 20px; padding: 4px 8px 0; white-space: nowrap; }
.tab.active {
  padding: 3px 5px 0;
  margin-right: 4px;
  background: linear-gradient(#fff, #fdfdfd);
  border: 1px solid #878787;
  border-bottom: 0;
  border-radius: 3px 3px 0 0;
}
.orb { position: absolute; left: 0; top: -16px; width: 38px; height: 38px; }
.orb svg, .help svg { display: block; width: 100%; height: 100%; }
.help { width: 16px; height: 16px; margin: 0 2px 4px auto; }

/* ribbon */
.ribbon {
  height: 90px;
  flex: none;
  display: flex;
  gap: 1px;
  padding: 1px 0 0 3px;
  background: linear-gradient(#fff, #d2d2d2);
  border: 1px solid #848484;
  border-width: 1px 1px 1px 0;
  border-radius: 0 4px 0 0;
}
.group {
  height: 87px;
  display: flex;
  flex-direction: column;
  border: 1px solid #8b8b8b;
  border-radius: 3px;
  margin-right: 1px;
  background: linear-gradient(#f6f6f6, #e3e1e1);
  box-shadow: 0 0 0 1px #f6f6f6;
}
.g-search { width: 204px; }
.g-record { width: 268px; }
.g-output { width: 102px; }
.g-actions { width: 398px; }
.g-entry { width: 63px; }
.g-clip { width: 96px; }
.items { flex: 1; display: flex; justify-content: center; padding-top: 5px; }
.group h2 {
  height: 17px;
  padding-top: 1px;
  text-align: center;
  background: linear-gradient(#b5b7b5, #9b9d9b);
}
.tool {
  display: flex;
  flex-direction: column;
  align-items: center;
  padding: 0 5px 0 4px;
  color: #444;
  white-space: nowrap;
}
.tool svg { width: 32px; height: 32px; flex: none; }
.tool span { height: 16px; }
.tool i, .combo i {
  border: 3px solid transparent;
  border-top-color: #000;
  border-bottom: 0;
}
.tool i { margin-top: 1px; }
.tool:disabled { color: #a3a3a3; }
.tool:disabled svg { opacity: .45; }
.g-search .items { justify-content: flex-start; padding-left: 14px; }
.search { width: 125px; margin-right: 1px; padding-top: 6px; }
.search input {
  display: block;
  width: 100%;
  height: 23px;
  padding: 0 4px;
  border: 1px solid #5c87b0;
  border-radius: 2px;
  background: #fff;
  color: #000;
}
.search label { display: block; padding-top: 4px; color: #444; white-space: nowrap; }

/* sidebar */
.body { flex: 1; min-height: 0; display: flex; }
.sidebar {
  width: 209px;
  flex: none;
  display: flex;
  flex-direction: column;
  margin-left: 1px;
  border-left: 1px solid #888;
  border-right: 1px solid #71879c;
}
.panel-head {
  height: 25px;
  flex: none;
  display: flex;
  align-items: center;
  justify-content: space-between;
  padding: 0 9px 0 6px;
  font-weight: bold;
  background: linear-gradient(#f6f6f7, #dcdde2);
  border-bottom: 1px solid #97a5b5;
}
.collapse { width: 8px; height: 12px; }
.collapse::before {
  content: "";
  display: block;
  width: 5px;
  height: 5px;
  margin: 3px 0 0 2px;
  border: solid #333;
  border-width: 0 0 1px 1px;
  transform: rotate(45deg);
}
.info { display: flex; flex-direction: column; gap: 1px; padding: 1px 1px 3px; border-left: 1px solid #888; flex: none; }
.fold {
  height: 21px;
  display: flex;
  align-items: center;
  gap: 5px;
  padding: 0 6px 0 2px;
  font-weight: bold;
  border: 1px solid #fff;
  outline: 1px solid #8a8a8a;
  background: linear-gradient(#e5e5e5, #a8a8a8);
}
.fold b { margin-left: auto; width: 6px; height: 6px; border: solid #000; border-width: 2px 0 0 2px; }
.fold .up { transform: translateY(2px) rotate(45deg); }
.fold .down { transform: translateY(-2px) rotate(225deg); }
.combo {
  height: 22px;
  display: flex;
  align-items: center;
  margin: 2px 1px 3px;
  padding-left: 11px;
  background: linear-gradient(#f0f0f0, #cfcfcf);
  border: 1px solid #8a8a8a;
}
.combo select {
  flex: 1;
  min-width: 0;
  height: 20px;
  margin-right: 8px;
  padding: 0 0 0 6px;
  border: 0;
  appearance: none;
  background: none;
  overflow: hidden;
}
.combo i { margin: 0 4px 0 0; }
.recent { height: 154px; display: flex; border: 1px solid #aaa; overflow: hidden; }
.recent table { flex: 1; height: 162px; }
.recent td { height: 27px; border: 1px solid #4a7aa5; border-width: 0 1px 1px 0; }
.recent td:first-child { width: 21px; padding-left: 2px; }
.recent td:last-child { padding-left: 5px; }
.scroll {
  width: 16px;
  display: flex;
  flex-direction: column;
  align-items: center;
  padding: 7px 0;
  background: linear-gradient(90deg, #e2e6ea, #fafbfc);
}
.scroll i { border: 3px solid transparent; }
.scroll .sup { border-bottom: 4px solid #333; border-top: 0; }
.scroll .sdown { border-top: 4px solid #333; border-bottom: 0; margin-top: auto; }
.scroll span { width: 14px; height: 18px; margin-top: 7px; border: 1px solid #92a0b3; border-radius: 2px; background: linear-gradient(90deg, #fff, #d9dce2); }
.splitter {
  height: 9px;
  flex: none;
  background: #efefef;
  border: 1px solid #888;
  border-width: 1px 0;
  display: grid;
  place-items: center;
}
.splitter::before { content: ""; width: 14px; height: 2px; background: repeating-linear-gradient(90deg, #000 0 2px, transparent 2px 4px); }

.tree { flex: 1; min-height: 0; padding: 0 3px 0 9px; overflow: hidden; }
.tree li { height: 24px; display: flex; align-items: center; padding-left: 32px; }
.tree a { display: flex; align-items: center; gap: 3px; height: 22px; }
.tree .root { padding-left: 0; }
.tree .root::before { content: ""; border: 4px solid; border-color: transparent #333 #333 transparent; margin-right: 4px; }
.tree .root a { flex: 1; padding-left: 7px; border: 1px solid transparent; }
.tree .root a.selected { background: linear-gradient(#eceef7, #b2bbdf); border-color: #d6d9e6; }

.modules { flex: none; }
.modules button {
  width: 100%;
  height: 38px;
  display: flex;
  align-items: center;
  gap: 9px;
  padding-left: 9px;
  color: #2f2f2f;
  font-weight: bold;
  border: 1px solid #fff;
  border-bottom: 1px solid #888;
  box-shadow: inset 0 -1px #fff;
  background: linear-gradient(#e6e6e6, #a2a2a2);
}
.modules svg { width: 22px; height: 22px; }
.modules .current { background: linear-gradient(#abb7dc, #6e7cba); border: 1px solid #777; border-top: 1px solid #333; box-shadow: none; }
.more { height: 6px; background: #bcbcbc; border-top: 1px solid #fff; }

/* record view */
main { flex: 1; min-width: 0; display: flex; flex-direction: column; }
.main-head {
  height: 27px;
  flex: none;
  display: flex;
  align-items: center;
  padding: 1px 5px 0 6px;
  border-bottom: 1px solid #9baab9;
  background: linear-gradient(#f6f6f7, #dcdde2);
}
.main-head h2 { flex: 1; display: flex; gap: 13px; font-size: 13px; font-weight: bold; }
.main-head p { font-weight: bold; color: #808080; }
.main-head svg { width: 20px; height: 20px; margin-left: 16px; }
.columns {
  flex: 1;
  min-height: 0;
  display: grid;
  grid-template-columns: 717fr 940fr;
  gap: 17px;
  padding: 11px 16px 0 15px;
}
.panel { border: 1px solid #97a7b7; border-bottom: 0; border-radius: 3px 3px 0 0; overflow: hidden; }
.panel h3 {
  height: 26px;
  display: flex;
  align-items: center;
  gap: 8px;
  padding: 1px 0 0 4px;
  font-weight: bold;
  background: linear-gradient(#f5f5f6, #d8d9de);
}
.panel h3 svg { width: 20px; height: 20px; }
.left { padding: 7px 5px 0 6px; }
.s-address { height: 257px; display: flex; flex-direction: column; }
.s-address address { padding: 57px 3px 0; font-size: 14px; line-height: 20px; font-weight: bold; }
.code { margin-top: auto; padding: 0 3px 8px; text-align: right; font-size: 14px; }
.s-remarks { height: 135px; }
.s-remarks p { padding: 8px 3px; }
.s-traits table { margin: 2px 0 0 5px; }
.s-traits th { width: 194px; height: 24px; }
.right { padding: 6px 6px 0; }
.right section { padding-bottom: 6px; }
.right h3 { position: relative; margin-bottom: 3px; }
.right h3::after { content: ""; position: absolute; left: 1px; right: 1px; top: 27px; height: 1px; background: #c3c5c5; }
.right table, .right p, .attributes { margin-left: 5px; }
.right td { height: 24px; }
.right p { height: 24px; padding-top: 4px; }
.c-amount { width: 51px; }
.c-date { width: 73px; }
.c-dash { width: 20px; }
.c-state { width: 37px; }
.c-subject { width: 162px; }
.c-name { width: 121px; }
.c-option { width: 124px; }
.c-from { width: 23px; }
.c-number { width: 91px; }
.c-kind { width: 58px; }
.c-mail { width: 176px; }
.attributes { height: 24px; display: flex; align-items: center; gap: 12px; padding-right: 5px; white-space: nowrap; }
.count { margin-left: auto; }
```
